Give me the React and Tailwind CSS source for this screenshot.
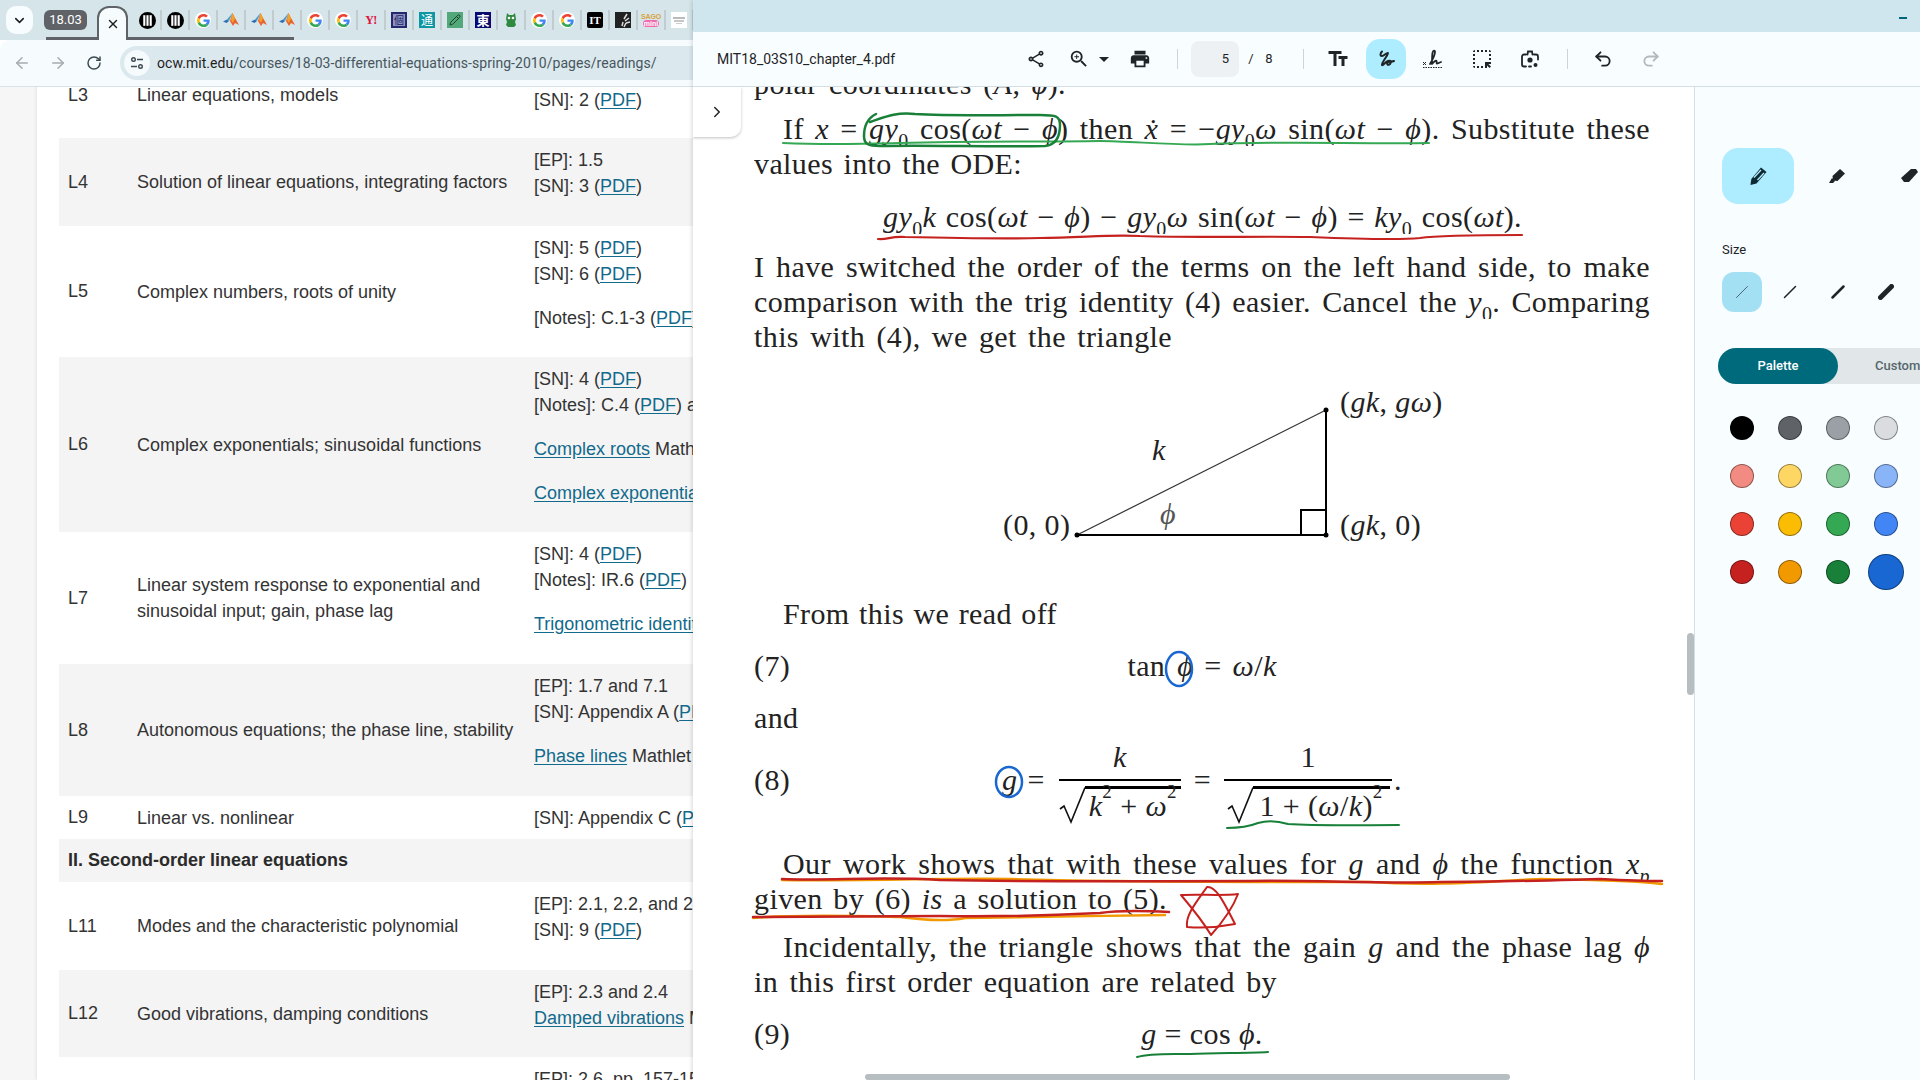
import React from 'react';
import { ChevronDown, ChevronRight, ArrowLeft, ArrowRight, RotateCw, X, Pencil, Undo2, Redo2 } from 'lucide-react';
import {
  MdOutlineShare,
  MdOutlineZoomIn,
  MdArrowDropDown,
  MdPrint,
  MdTextFields,
  MdHighlightAlt,
} from 'react-icons/md';

const A = ({ children }) => <span className="text-[#126a8c] underline underline-offset-2">{children}</span>;

const rows = [
  { id: 'L3', title: 'Linear equations, models', h: 'h-[86px] -mt-[35px]', refs: [[<>[EP]: 1.4</>, <>[SN]: 2 (<A>PDF</A>)</>]] },
  { id: 'L4', title: 'Solution of linear equations, integrating factors', h: 'h-[88px]', grey: true, refs: [[<>[EP]: 1.5</>, <>[SN]: 3 (<A>PDF</A>)</>]] },
  { id: 'L5', title: 'Complex numbers, roots of unity', h: 'h-[131px]', refs: [[<>[SN]: 5 (<A>PDF</A>)</>, <>[SN]: 6 (<A>PDF</A>)</>], [<>[Notes]: C.1-3 (<A>PDF</A>)</>]] },
  { id: 'L6', title: 'Complex exponentials; sinusoidal functions', h: 'h-[175px]', grey: true, refs: [[<>[SN]: 4 (<A>PDF</A>)</>, <>[Notes]: C.4 (<A>PDF</A>) and C.5</>], [<><A>Complex roots</A> Mathlet</>], [<><A>Complex exponential</A> Mathlet</>]] },
  { id: 'L7', title: <>Linear system response to exponential and<br />sinusoidal input; gain, phase lag</>, h: 'h-[132px]', refs: [[<>[SN]: 4 (<A>PDF</A>)</>, <>[Notes]: IR.6 (<A>PDF</A>)</>], [<><A>Trigonometric identity</A> Mathlet</>]] },
  { id: 'L8', title: 'Autonomous equations; the phase line, stability', h: 'h-[132px]', grey: true, refs: [[<>[EP]: 1.7 and 7.1</>, <>[SN]: Appendix A (<A>PDF</A>)</>], [<><A>Phase lines</A> Mathlet</>]] },
  { id: 'L9', title: 'Linear vs. nonlinear', h: 'h-[43px]', refs: [[<>[SN]: Appendix C (<A>PDF</A>)</>]] },
  { section: 'II. Second-order linear equations' },
  { id: 'L11', title: 'Modes and the characteristic polynomial', h: 'h-[88px]', refs: [[<>[EP]: 2.1, 2.2, and 2.3</>, <>[SN]: 9 (<A>PDF</A>)</>]] },
  { id: 'L12', title: 'Good vibrations, damping conditions', h: 'h-[87px]', grey: true, refs: [[<>[EP]: 2.3 and 2.4</>, <><A>Damped vibrations</A> Mathlet</>]] },
  { id: 'L13', title: 'Forced oscillations', h: 'h-[88px]', refs: [[<>[EP]: 2.6, pp. 157-158</>]] },
];

function GoogleIcon() {
  return (
    <div className="w-4 h-4 rounded-full bg-white flex items-center justify-center">
      <svg viewBox="0 0 48 48" className="w-[13px] h-[13px]">
        <path fill="#EA4335" d="M24 9.5c3.5 0 6.7 1.3 9.2 3.5l6.9-6.9C35.9 2.4 30.3 0 24 0 14.6 0 6.5 5.4 2.6 13.2l8 6.2C12.5 13.6 17.8 9.5 24 9.5z" />
        <path fill="#4285F4" d="M46.9 24.5c0-1.6-.1-3.1-.4-4.5H24v9h12.9c-.6 3-2.2 5.5-4.8 7.200l7.700 6c4.500-4.200 7.100-10.300 7.100-17.700z" />
        <path fill="#FBBC05" d="M10.600 28.600c-.5-1.400-.8-3-.8-4.600s.3-3.200.8-4.600l-8-6.200C.9 16.500 0 20.100 0 24s.9 7.500 2.600 10.800l8-6.200z" />
        <path fill="#34A853" d="M24 48c6.500 0 11.900-2.100 15.900-5.800l-7.700-6c-2.200 1.500-4.900 2.300-8.200 2.300-6.200 0-11.500-4.200-13.400-9.800l-8 6.200C6.500 42.600 14.600 48 24 48z" />
      </svg>
    </div>
  );
}

function BarsIcon() {
  return (
    <svg viewBox="0 0 16 16" className="w-[17px] h-[17px]">
      <circle cx="8" cy="8" r="8" fill="#000" />
      <rect x="4" y="3" width="2" height="10" fill="#fff" />
      <rect x="7" y="3" width="2" height="10" fill="#fff" />
      <rect x="10" y="3" width="2" height="10" fill="#fff" />
    </svg>
  );
}

function MatlabIcon() {
  return (
    <svg viewBox="0 0 16 16" className="w-4 h-4">
      <path d="M0 9.500 4 7.500 6 9 3.500 11z" fill="#2f6fb5" />
      <path d="M4 7.500 9.500 1 6 9z" fill="#4a9bc9" />
      <path d="M9.500 1 12 6 16 13 12 11 10 14 7 9z" fill="#e8622c" />
      <path d="M9.500 1 12 6 10 11 8 8z" fill="#f4a12a" />
    </svg>
  );
}

const favicons = [
  <BarsIcon />,
  <BarsIcon />,
  <GoogleIcon />,
  <MatlabIcon />,
  <MatlabIcon />,
  <MatlabIcon />,
  <GoogleIcon />,
  <GoogleIcon />,
  <span className="font-['Liberation_Serif',serif] font-bold text-[12px] text-[#e0103a] leading-none tracking-tighter">Y!</span>,
  <div className="w-4 h-4 bg-[#8f93c4] border-2 border-[#26286e] text-[10px] leading-[12px] text-center text-[#1d1f5c] font-['Noto_Sans_CJK_JP',sans-serif]">個</div>,
  <div className="w-4 h-4 bg-[#0d97a3] text-[12px] leading-4 text-center text-white font-['Noto_Sans_CJK_JP',sans-serif]">通</div>,
  <div className="w-4 h-4 bg-[#52a878] flex items-center justify-center"><Pencil size={12} className="text-[#17402c]" /></div>,
  <div className="w-4 h-4 bg-[#0a0a6e] text-[13px] leading-4 text-center text-white font-bold font-['Noto_Sans_CJK_JP',sans-serif]">東</div>,
  <svg viewBox="0 0 16 16" className="w-4 h-4">
    <path d="M4 1 6 3h4l2-2 1 6-1 3 1 3-2 2H5l-2-2 1-3-1-3z" fill="#2f8a3f" />
    <circle cx="6" cy="6" r="1.300" fill="#fff" />
    <circle cx="10" cy="6" r="1.300" fill="#fff" />
  </svg>,
  <GoogleIcon />,
  <GoogleIcon />,
  <div className="w-4 h-4 bg-black rounded-[2px] text-[11px] leading-4 text-center text-white font-bold font-['Liberation_Serif',serif]">IT</div>,
  <svg viewBox="0 0 16 16" className="w-4 h-4">
    <rect width="16" height="16" fill="#222" />
    <path d="M7 14 8 10M9 15l2-4M10 9l4-3M9 7l3-5M11 11l4-1" stroke="#ddd" strokeWidth="1.500" />
  </svg>,
  <div className="w-4 flex flex-col items-center leading-none">
    <span className="text-[7px] font-bold text-[#d9a23a] font-['Liberation_Sans',sans-serif] tracking-tight">SAGO</span>
    <span className="w-4 text-center rounded-full bg-[#f06ab0] text-[7px] font-bold text-white font-['Liberation_Sans',sans-serif]">mini</span>
  </div>,
  <svg viewBox="0 0 16 16" className="w-4 h-4">
    <rect width="16" height="16" fill="#fff" />
    <rect x="2" y="5" width="12" height="2" fill="#bbb" />
    <rect x="3" y="8" width="10" height="2" fill="#c8c8c8" />
    <rect x="5" y="11" width="6" height="1" fill="#ccc" />
  </svg>,
];

function BrowserChrome() {
  return (
    <div className="shrink-0 font-[Roboto,sans-serif]">
      {/* Tab strip */}
      <div className="relative h-10 bg-[#d5e5ea] flex items-start pt-[6px] pl-[6px] overflow-hidden">
        <div className="absolute left-[46px] bottom-0 w-[248px] h-[3px] bg-[#5f6368]" />
        <div className="w-[27px] h-7 shrink-0 bg-[#f7fcfe] rounded-[10px] flex items-center justify-center">
          <ChevronDown size={15} strokeWidth={2.5} className="text-[#1f1f1f]" />
        </div>
        <div className="ml-[11px] mt-1 w-[43px] h-5 shrink-0 bg-[#5f6368] rounded-[6px] text-[13px] leading-5 text-center text-white">18.03</div>
        <div className="relative ml-[10px] w-[31px] h-[34px] shrink-0 bg-[#f6fbfd] border-2 border-b-0 border-[#5f6368] rounded-t-[12px] flex items-center justify-center">
          <X size={14} strokeWidth={2.5} className="text-[#1f1f1f]" />
        </div>
        <div className="ml-[6px] mt-1 flex items-center shrink-0">
          {favicons.map((icon, i) => (
            <div key={i} className="relative w-[28px] h-5 flex items-center justify-center shrink-0 border-r-2 border-[#c2ccd0]">
              {icon}
            </div>
          ))}
        </div>
      </div>
      {/* Address bar */}
      <div className="h-[47px] bg-[#f6fbfd] border-b border-[#d8e3e7] rounded-tl-[10px] flex items-center">
        <ArrowLeft size={18} className="ml-[13px] text-[#a5adb1]" />
        <ArrowRight size={18} className="ml-[18px] text-[#a5adb1]" />
        <RotateCw size={16} strokeWidth={2.2} className="ml-[19px] text-[#3c4a50]" />
        <div className="ml-[18px] flex-1 h-[34px] bg-[#dbe8ed] rounded-l-full flex items-center pl-1">
          <div className="w-[26px] h-[26px] rounded-full bg-[#f5fafc] flex items-center justify-center">
            <svg viewBox="0 0 16 16" className="w-4 h-4" fill="none" stroke="#3c4a50" strokeWidth="1.400">
              <circle cx="4.500" cy="4.500" r="1.800" />
              <path d="M8 4.500h6M2 11.500h6" />
              <circle cx="11.500" cy="11.500" r="1.800" />
            </svg>
          </div>
          <div className="ml-[7px] text-[14px] text-[#47565e] whitespace-nowrap tracking-[0.05px]">
            <span className="text-[#1f1f1f]">ocw.mit.edu</span>/courses/18-03-differential-equations-spring-2010/pages/readings/
          </div>
        </div>
      </div>
    </div>
  );
}

function Row({ row }) {
  if (row.section) {
    return (
      <div className="h-[43px] bg-[#f4f4f4] pl-[9px] flex items-center font-bold text-[#2b2b2b]">{row.section}</div>
    );
  }
  return (
    <div className={`flex ${row.h} ${row.grey ? 'bg-[#f4f4f4]' : ''}`}>
      <div className="w-[78px] shrink-0 pl-[9px] self-center">{row.id}</div>
      <div className="w-[397px] shrink-0 self-center leading-[26px]">{row.title}</div>
      <div className="pt-[9px] whitespace-nowrap">
        {row.refs.map((para, i) => (
          <div key={i} className="mb-[18px]">
            {para.map((line, j) => <div key={j} className="h-[26px] leading-[26px]">{line}</div>)}
          </div>
        ))}
      </div>
    </div>
  );
}

function Readings() {
  return (
    <div className="flex-1 min-h-0 overflow-hidden bg-[#f6f6f6] pl-[37px]">
      <div className="h-[calc(100%+35px)] bg-white pl-[22px] shadow-[0_0_4px_rgba(0,0,0,0.12)] font-['Liberation_Sans',sans-serif] text-[18px] text-[#333333]">
        {rows.map((row, i) => <Row key={i} row={row} />)}
      </div>
    </div>
  );
}

function Squiggle() {
  return (
    <svg viewBox="0 0 24 24" className="w-6 h-6" fill="none" stroke="#1f2426" strokeWidth="2" strokeLinecap="round" strokeLinejoin="round">
      <path d="M8 4.500 C 6 6.500 6 9 8 9 C 10 9 13 5 14 6 C 15 7 7 16 8 18 C 9 19 11 15 14 14 C 17 13 18 15 16 17 C 14 19 12 17 14 15 C 16 14 18 15 20 14" />
    </svg>
  );
}

function SignIcon() {
  return (
    <svg viewBox="0 0 24 24" className="w-6 h-6" fill="none" stroke="#1f2426">
      <path d="M9 17 C 12 12 14 7 14 5 C 14 3 12 3 11.500 6 C 11 9 11 13 11 17 C 13 14.500 15 13 15.500 14 C 16 15 15 17 16.500 16.500 L 20 15" strokeWidth="1.800" strokeLinecap="round" strokeLinejoin="round" />
      <path d="M2 15l3 3M5 15l-3 3" strokeWidth="1" />
      <path d="M2 20.500h20" strokeWidth="1" strokeDasharray="1.500 1" />
    </svg>
  );
}

function LensIcon() {
  return (
    <svg viewBox="0 0 24 24" className="w-6 h-6" fill="none" stroke="#1f2426" strokeWidth="1.800" strokeLinecap="round">
      <path d="M4 9.500v8a2 2 0 0 0 2 2h2M4 9.500a2 2 0 0 1 2-2h2M16 7.500h2a2 2 0 0 1 2 2v3M9.500 7.500 10 4.500h4l.5 3" />
      <circle cx="12" cy="13" r="2.600" fill="#1f2426" stroke="none" />
      <circle cx="17.500" cy="18" r="2" fill="#1f2426" stroke="none" />
      <path d="M11 19.500h2" />
    </svg>
  );
}

function PdfToolbar() {
  return (
    <div className="h-[55px] shrink-0 bg-[#f8fdff] border-b border-[#d3dfe3] flex items-center pl-6 text-[#1f2426] font-[Roboto,sans-serif]">
      <div className="w-[295px] text-[14px] whitespace-nowrap">MIT18_03S10_chapter_4.pdf</div>
      <div className="w-12 flex justify-center"><MdOutlineShare size={20} /></div>
      <MdOutlineZoomIn size={22} className="ml-[8px]" />
      <MdArrowDropDown size={24} className="ml-[2px]" />
      <MdPrint size={22} className="ml-[13px]" />
      <div className="ml-[26px] w-px h-5 bg-[#ccd6da]" />
      <div className="ml-[13px] w-12 h-9 bg-[#edf1f3] rounded-[8px] text-[13px] leading-9 text-right pr-[10px]">5</div>
      <span className="ml-[8px] w-[8px] text-[13px] text-center">/</span>
      <span className="ml-[10px] w-[8px] text-[13px] text-center">8</span>
      <div className="ml-[30px] w-px h-5 bg-[#ccd6da]" />
      <MdTextFields size={24} className="ml-[22px]" />
      <div className="ml-[16px] w-10 h-10 bg-[#aeecff] rounded-[14px] flex items-center justify-center"><Squiggle /></div>
      <div className="ml-[15px]"><SignIcon /></div>
      <MdHighlightAlt size={24} className="ml-[25px]" />
      <div className="ml-[24px]"><LensIcon /></div>
      <div className="ml-[25px] w-px h-5 bg-[#ccd6da]" />
      <Undo2 size={20} strokeWidth={2.2} className="ml-[25px]" />
      <Redo2 size={20} strokeWidth={2.2} className="ml-[28px] text-[#b3babd]" />
    </div>
  );
}

const I = ({ children }) => <i>{children}</i>;
const Sub = ({ children }) => <sub className="text-[20px] leading-none align-[-4px]">{children}</sub>;
const Sup = ({ children }) => <sup className="text-[19px] leading-none align-[9px]">{children}</sup>;

function Line({ w, indent, mt, children }) {
  return (
    <div className={`h-[35px] leading-[35px] overflow-hidden text-justify [text-align-last:justify] ${w} ${indent ? 'ml-[29px]' : ''} ${mt || ''}`}>
      {children}
    </div>
  );
}

function Numbered({ n, mt, h, children }) {
  return (
    <div className={`relative flex items-center justify-center w-[896px] ${h || 'h-[35px]'} ${mt}`}>
      <span className="absolute left-0">({n})</span>
      {children}
    </div>
  );
}

function Radical({ w, children }) {
  return (
    <div className="flex pt-[5px] whitespace-nowrap">
      <svg viewBox="0 0 26 38" className="w-[26px] h-[38px] shrink-0" fill="none" stroke="#111">
        <path d="M1 23 L5 20 L12 36 L26 1.500" strokeWidth="1.600" />
      </svg>
      <div className={`${w} h-[34px] leading-[34px] text-center border-t-[3px] border-black`}>{children}</div>
    </div>
  );
}

function Fraction({ w, num, children }) {
  return (
    <div className={`${w} flex flex-col items-center`}>
      <div className="h-[44px] leading-[44px]">{num}</div>
      <div className="w-full border-t-2 border-black" />
      <div className="h-[42px]">{children}</div>
    </div>
  );
}

function Triangle() {
  return (
    <svg viewBox="1000 355 460 242" className="w-[460px] h-[242px] ml-[246px] block" fontFamily="'Liberation Serif', serif" fontSize="30" fill="#222">
      <path d="M1077 536 L1326 411" stroke="#333" strokeWidth="1.200" fill="none" />
      <path d="M1077 536 H1326 V411 M1301 536 V511 H1326" stroke="#000" strokeWidth="2" fill="none" />
      <circle cx="1077" cy="536" r="2.500" fill="#000" />
      <circle cx="1326" cy="411" r="2.500" fill="#000" />
      <circle cx="1326" cy="536" r="2.500" fill="#000" />
      <text x="1340" y="413">(<tspan fontStyle="italic">gk</tspan>, <tspan fontStyle="italic">gω</tspan>)</text>
      <text x="1340" y="536">(<tspan fontStyle="italic">gk</tspan>, 0)</text>
      <text x="1003" y="536">(0, 0)</text>
      <text x="1152" y="461" fontStyle="italic">k</text>
      <text x="1160" y="525" fontStyle="italic" fill="#555">ϕ</text>
    </svg>
  );
}

function PdfPage() {
  return (
    <div className="pl-[61px] -mt-[21px] font-['Liberation_Serif',serif] text-[30px] text-[#222222] tracking-[0.4px]">
      <Line w="w-[312px]">polar coordinates (<I>A</I>, <I>ϕ</I>).</Line>
      <Line w="w-[867px]" indent mt="mt-[10px]">If <I>x</I> = <I>gy</I><Sub>0</Sub> cos(<I>ωt</I> − <I>ϕ</I>) then <I>ẋ</I> = −<I>gy</I><Sub>0</Sub><I>ω</I> sin(<I>ωt</I> − <I>ϕ</I>). Substitute these</Line>
      <Line w="w-[268px]">values into the ODE:</Line>
      <Line w="w-[639px]" mt="ml-[129px] mt-[18px]"><I>gy</I><Sub>0</Sub><I>k</I> cos(<I>ωt</I> − <I>ϕ</I>) − <I>gy</I><Sub>0</Sub><I>ω</I> sin(<I>ωt</I> − <I>ϕ</I>) = <I>ky</I><Sub>0</Sub> cos(<I>ωt</I>).</Line>
      <Line w="w-[896px]" mt="mt-[15px]">I have switched the order of the terms on the left hand side, to make</Line>
      <Line w="w-[896px]">comparison with the trig identity (4) easier. Cancel the <I>y</I><Sub>0</Sub>. Comparing</Line>
      <Line w="w-[418px]">this with (4), we get the triangle</Line>
      <Triangle />
      <Line w="w-[274px]" indent>From this we read off</Line>
      <Numbered n="7" mt="mt-[17px]">
        <div className="flex whitespace-nowrap">
          <span>tan</span><I><span className="ml-[12px]">ϕ</span></I><span className="ml-[11px]">=</span><span className="ml-[11px]"><I>ω</I>/<I>k</I></span>
        </div>
      </Numbered>
      <Line w="w-[46px]" mt="mt-[17px]">and</Line>
      <Numbered n="8" h="h-[88px]" mt="mt-0">
        <div className="flex items-center">
          <I>g</I>
          <span className="ml-[10px]">=</span>
          <Fraction w="ml-[14px] w-[122px]" num={<I>k</I>}>
            <Radical w="w-[96px]"><I>k</I><Sup>2</Sup> + <I>ω</I><Sup>2</Sup></Radical>
          </Fraction>
          <span className="ml-[13px]">=</span>
          <Fraction w="ml-[13px] w-[168px]" num="1">
            <Radical w="w-[137px]">1 + (<I>ω</I>/<I>k</I>)<Sup>2</Sup></Radical>
          </Fraction>
          <span className="ml-[2px]">.</span>
        </div>
      </Numbered>
      <Line w="w-[867px]" indent mt="mt-[23px]">Our work shows that with these values for <I>g</I> and <I>ϕ</I> the function <I>x</I><Sub><I>p</I></Sub></Line>
      <Line w="w-[413px]">given by (6) <I>is</I> a solution to (5).</Line>
      <Line w="w-[867px]" indent mt="mt-[13px]">Incidentally, the triangle shows that the gain <I>g</I> and the phase lag <I>ϕ</I></Line>
      <Line w="w-[523px]">in this first order equation are related by</Line>
      <Numbered n="9" mt="mt-[17px]"><span className="whitespace-nowrap"><I>g</I> = cos <I>ϕ</I>.</span></Numbered>
    </div>
  );
}

function InkLayer() {
  return (
    <svg viewBox="693 87 1001 993" className="absolute inset-0 w-full h-full pointer-events-none" fill="none" strokeLinecap="round" strokeLinejoin="round">
      {/* green */}
      <path d="M783 143 C 830 145 860 144 900 143 C 980 141 1040 142 1100 141 C 1130 141 1180 146 1210 144 C 1280 141 1360 144 1429 143" stroke="#34a853" strokeWidth="2" />
      <path d="M876 114 C 868 118 864 125 864 136 C 864 144 868 146 880 146 C 930 145 990 147 1045 146 C 1056 145 1060 136 1060 125 C 1060 116 1056 115 1040 115 C 990 115 950 116 915 114 C 895 112 885 117 870 122" stroke="#188038" strokeWidth="2.500" />
      <path d="M1227 828 C 1240 828 1248 827 1258 823 C 1268 820 1278 821 1288 824 C 1320 826 1360 825 1399 825" stroke="#188038" strokeWidth="2" />
      <path d="M1137 1057 C 1150 1053 1170 1054 1190 1054 C 1220 1053 1250 1053 1268 1052" stroke="#188038" strokeWidth="2" />
      {/* red */}
      <path d="M878 239 C 888 240 890 236 905 237 C 950 238 1000 239 1040 238 C 1080 238 1110 234 1140 236 C 1200 238 1260 236 1310 237 C 1360 239 1400 240 1420 238 C 1440 235 1480 235 1522 235" stroke="#c5221f" strokeWidth="2.200" />
      {/* orange under red */}
      <path d="M782 880 C 850 881 950 878 1010 879 C 1100 882 1250 882 1370 882 C 1430 886 1480 882 1540 879 C 1580 880 1630 880 1662 884" stroke="#f29900" strokeWidth="2.500" />
      <path d="M753 918 C 800 914 860 916 900 917 C 930 921 950 921 965 918 C 1020 917 1100 916 1165 915" stroke="#f29900" strokeWidth="2.500" />
      <path d="M782 879 C 830 881 880 876 940 880 C 1040 882 1140 881 1250 881 C 1320 880 1380 884 1440 882 C 1500 882 1560 880 1600 879 C 1620 880 1640 881 1662 881" stroke="#c5221f" strokeWidth="2.500" />
      <path d="M753 917 C 800 917 860 916 940 916 C 1000 917 1060 915 1100 913 C 1120 910 1150 911 1169 912" stroke="#c5221f" strokeWidth="2.500" />
      {/* star */}
      <path d="M1181 895 C 1200 894 1222 896 1238 894 C 1232 910 1220 925 1211 935 C 1202 920 1192 908 1181 895 Z" stroke="#c5221f" strokeWidth="2" />
      <path d="M1207 887 C 1215 886 1222 898 1235 924 C 1220 927 1200 928 1187 927 C 1185 915 1198 900 1207 887 Z" stroke="#c5221f" strokeWidth="2" />
      {/* blue */}
      <ellipse cx="1179" cy="669" rx="13" ry="17" stroke="#1967d2" strokeWidth="2.500" />
      <ellipse cx="1009" cy="782" rx="13" ry="15" stroke="#1967d2" strokeWidth="2.500" />
    </svg>
  );
}

function PdfView() {
  return (
    <div className="relative flex-1 min-w-0 overflow-hidden bg-white border-r border-[#d3dfe3]">
      <PdfPage />
      <InkLayer />
      {/* Sidebar toggle */}
      <div className="absolute left-0 top-0 w-[48px] h-[50px] bg-white rounded-br-[10px] shadow-[0_1px_3px_rgba(0,0,0,0.25)] flex items-center justify-center">
        <ChevronRight size={18} strokeWidth={2} className="text-[#1f2426]" />
      </div>
      {/* Scrollbars */}
      <div className="absolute right-0 top-[546px] w-[7px] h-[62px] bg-[#b6bec2] rounded-full" />
      <div className="absolute left-[172px] bottom-0 w-[645px] h-[6px] bg-[#b6bec2] rounded-full" />
    </div>
  );
}

const swatches = [
  'bg-black', 'bg-[#5f6368]', 'bg-[#9aa0a6]', 'bg-[#dadce0]',
  'bg-[#f28b82]', 'bg-[#fdd663]', 'bg-[#81c995]', 'bg-[#8ab4f8]',
  'bg-[#ea4335]', 'bg-[#fbbc04]', 'bg-[#34a853]', 'bg-[#4285f4]',
  'bg-[#c5221f]', 'bg-[#f29900]', 'bg-[#188038]', 'bg-[#1967d2]',
];

const sizes = [1, 1.5, 2.5, 5];

function InkPanel() {
  return (
    <div className="w-[225px] shrink-0 overflow-hidden bg-[#f8fdff] pl-[27px] pt-[61px] font-[Roboto,sans-serif]">
      <div className="flex w-[240px]">
        <div className="w-[72px] h-14 shrink-0 bg-[#aeecff] rounded-[16px] flex items-center justify-center">
          <svg viewBox="0 0 24 24" className="w-6 h-6" fill="#102a33">
            <path d="M15 3.500 20.500 8 10.500 19.500 4.500 21l.8-6z" />
            <path d="M8 13.500 15 6" stroke="#aeecff" strokeWidth="1.300" />
            <path d="M11.500 16 18 9" stroke="#aeecff" strokeWidth="1.300" />
          </svg>
        </div>
        <div className="ml-[7px] w-[72px] h-14 shrink-0 flex items-center justify-center">
          <svg viewBox="0 0 24 24" className="w-6 h-6" fill="#1f2426">
            <path d="M15 5 20 9.500 12.500 17 8 16.500 7.500 12z" />
            <path d="M7 14 10 17 8 19H4z" />
          </svg>
        </div>
        <div className="ml-0 w-[72px] h-14 shrink-0 flex items-center justify-center">
          <svg viewBox="0 0 24 24" className="w-6 h-6" fill="#1f2426">
            <path d="M14 5h5l2 3-9 10H7L4 14z" />
          </svg>
        </div>
      </div>
      <div className="mt-[38px] text-[13px] leading-4 text-[#1f2426]">Size</div>
      <div className="mt-[14px] flex w-[192px]">
        {sizes.map((s, i) => (
          <div key={s} className={`w-10 h-10 mr-2 rounded-[12px] flex items-center justify-center ${i === 0 ? 'bg-[#a4e0f3]' : ''}`}>
            <svg viewBox="0 0 16 16" className="w-4 h-4">
              <path d="M2.500 13.500 13.500 2.500" stroke={i === 0 ? '#4b6670' : '#1f2426'} strokeWidth={s} strokeLinecap="round" />
            </svg>
          </div>
        ))}
      </div>
      <div className="mt-[36px] -ml-1 flex h-9 bg-[#e1e6e8] rounded-l-[18px] text-[13px] font-medium">
        <div className="w-[120px] shrink-0 bg-[#006a7d] text-white rounded-[18px] flex items-center justify-center">Palette</div>
        <div className="w-[76px] pl-[37px] text-[#55666d] leading-9 whitespace-nowrap">Custom</div>
      </div>
      <div className="mt-[20px] grid grid-cols-[repeat(4,48px)] auto-rows-[48px] -ml-[4px]">
        {swatches.map((c, i) => (
          <div key={c} className="flex items-center justify-center">
            <div className={`rounded-full border border-black/40 ${c} ${i === 15 ? 'w-9 h-9' : 'w-6 h-6'}`} />
          </div>
        ))}
      </div>
    </div>
  );
}

export default function App() {
  return (
    <div className="flex w-[1920px] h-[1080px] overflow-hidden bg-white">
      <div className="w-[693px] shrink-0 flex flex-col overflow-hidden">
        <BrowserChrome />
        <Readings />
      </div>
      <div className="relative z-10 flex-1 min-w-0 flex flex-col shadow-[-1px_0_4px_rgba(0,0,0,0.15)]">
        <div className="h-8 shrink-0 bg-[#cfe6ee] flex items-center justify-end pr-[13px]">
          <div className="w-2 h-[2px] mt-1 bg-[#00677a]" />
        </div>
        <PdfToolbar />
        <div className="flex-1 min-h-0 flex">
          <PdfView />
          <InkPanel />
        </div>
      </div>
    </div>
  );
}
